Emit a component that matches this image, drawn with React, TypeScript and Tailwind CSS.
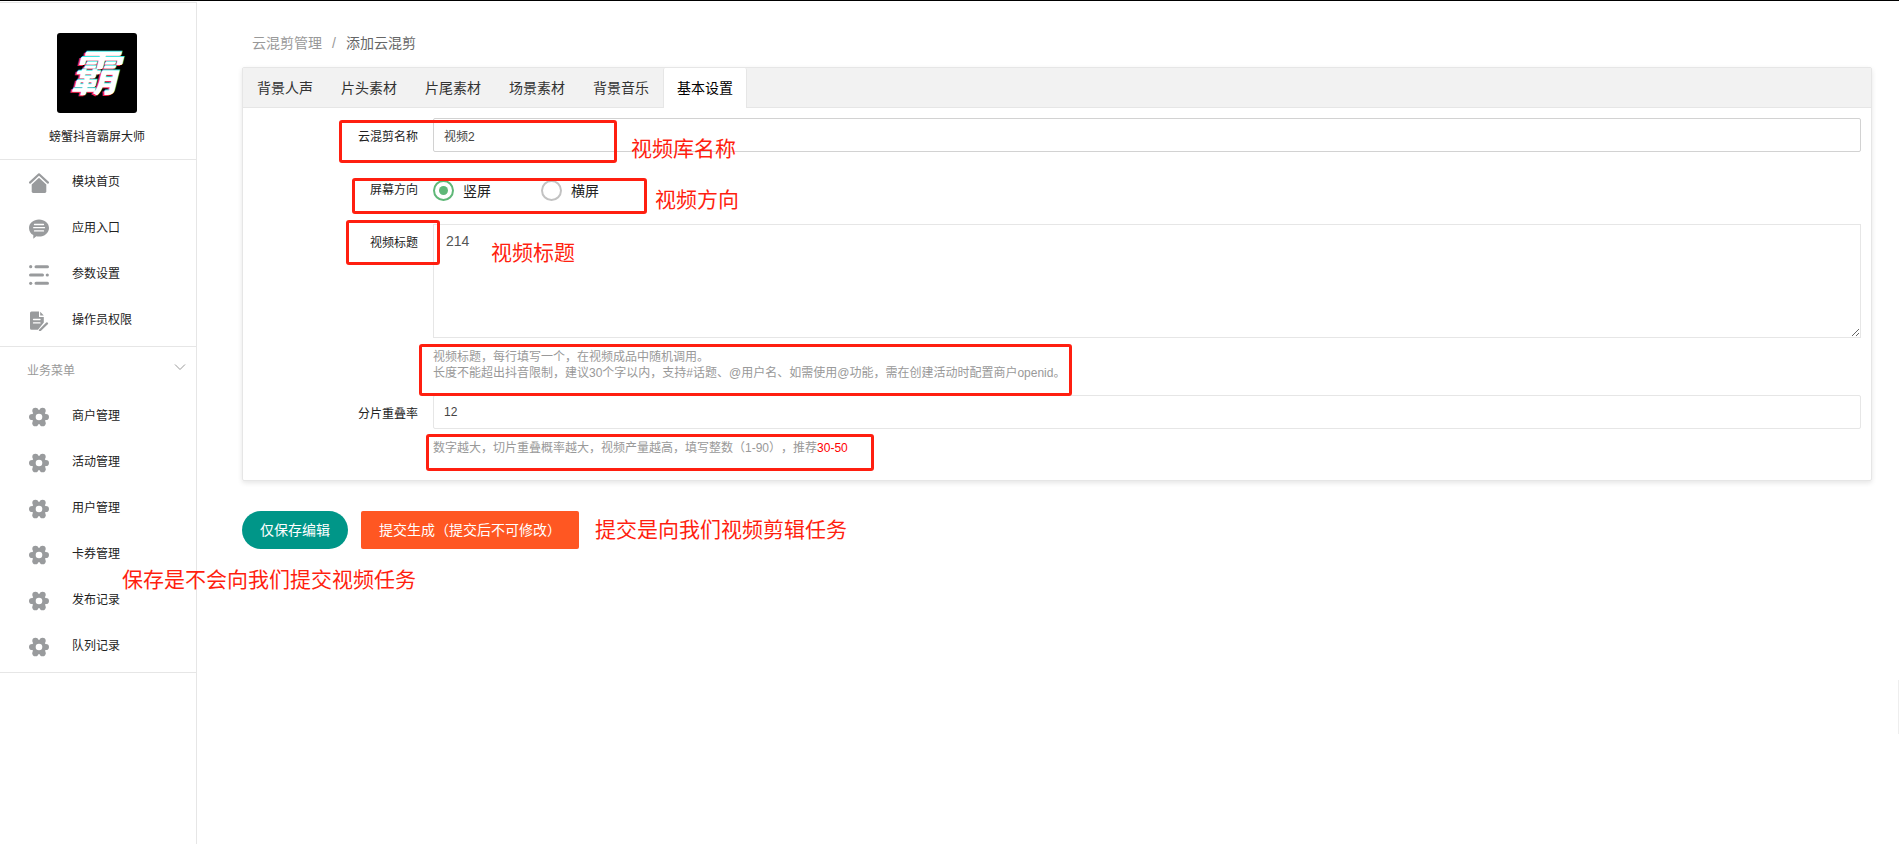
import React, { useState } from "react";

const systemMenu = [
  { name: "模块首页", icon: "home" },
  { name: "应用入口", icon: "chat" },
  { name: "参数设置", icon: "sliders" },
  { name: "操作员权限", icon: "doc" },
];

const businessMenu = ["商户管理", "活动管理", "用户管理", "卡券管理", "发布记录", "队列记录"];

const tabs = ["背景人声", "片头素材", "片尾素材", "场景素材", "背景音乐", "基本设置"];

function MenuIcon({ kind }: { kind: string }) {
  return (
    <svg viewBox="0 0 20 20" className="size-5 shrink-0" fill="#999b9d" aria-hidden="true">
      {kind === "home" && (
        <>
          <path d="M1 9.600 10 1.300l9 8.300" fill="none" stroke="#999b9d" strokeWidth="2.200" strokeLinecap="round" strokeLinejoin="round" />
          <path d="M10 4.800 17.300 11.500v7.100a1.400 1.400 0 0 1-1.400 1.400H4.100a1.400 1.400 0 0 1-1.400-1.400V11.500z" />
        </>
      )}
      {kind === "chat" && (
        <>
          <path d="M10 0.500c5.600 0 10 3.600 10 8.400s-4.400 8.600-10 8.600c-1 0-1.900-.1-2.700-.3L4.300 19.800v-3.700C1.700 14.600 0 12 0 8.900 0 4.100 4.400.5 10 .5z" />
          <path d="M5.500 5.500h9M4.700 8.700h10.800M5.500 11.900h9" stroke="#fff" strokeWidth="1.300" strokeLinecap="round" />
        </>
      )}
      {kind === "sliders" && (
        <>
          <path d="M7 1.700h11.500M1.500 10h12M7 18.300h11.500" stroke="#999b9d" strokeWidth="3" strokeLinecap="round" />
          <circle cx="1.700" cy="1.700" r="1.600" />
          <circle cx="18.300" cy="10" r="1.600" />
          <circle cx="1.700" cy="18.300" r="1.600" />
        </>
      )}
      {kind === "doc" && (
        <>
          <path d="M2.500 .5H10v5.500h4.800v5.500L9 18.800H2.500A1.500 1.500 0 0 1 1 17.300V2A1.500 1.500 0 0 1 2.500.5zM11.200.8l3.600 3.800h-3.600z" />
          <path d="M4.500 8.500h6.500M4.500 11.900h6.500" stroke="#fff" strokeWidth="1.300" strokeLinecap="round" />
          <path d="M11 19.200 18 12.400" stroke="#999b9d" strokeWidth="2.200" strokeLinecap="round" />
        </>
      )}
      {kind === "gear" && (
        <>
          <circle cx="10" cy="10" r="7.200" />
          <circle cx="3.100" cy="10" r="3.100" />
          <circle cx="16.900" cy="10" r="3.100" />
          <circle cx="6.400" cy="3.800" r="3.100" />
          <circle cx="13.600" cy="3.800" r="3.100" />
          <circle cx="6.400" cy="16.200" r="3.100" />
          <circle cx="13.600" cy="16.200" r="3.100" />
          <circle cx="10" cy="10" r="3.300" fill="#fff" />
        </>
      )}
    </svg>
  );
}

function MenuItem({ name, icon }: { name: string; icon: string }) {
  return (
    <li>
      <a href="#" className="flex h-[46px] items-center gap-[23px] pl-[29px] text-xs text-[#222]">
        <MenuIcon kind={icon} />
        <span className="pb-0.5">{name}</span>
      </a>
    </li>
  );
}

function Mark({ className }: { className: string }) {
  return <div className={`pointer-events-none absolute rounded-[3px] border-3 border-[#ff1f10] ${className}`} />;
}

function Note({ className, children }: { className: string; children: string }) {
  return (
    <p className={`pointer-events-none absolute text-[21px] leading-8 whitespace-nowrap text-[#ff1f10] ${className}`}>
      {children}
    </p>
  );
}

const label = "w-[175px] shrink-0 text-right text-xs leading-5 text-[#222]";
const radio =
  "grid size-[21px] appearance-none place-items-center rounded-full border-2 border-[#c2c2c2] bg-white before:size-[9px] before:rounded-full checked:border-[#5fb878] checked:before:bg-[#5fb878]";

export default function App() {
  const [active, setActive] = useState("基本设置");
  const [direction, setDirection] = useState("竖屏");

  return (
    <div className="relative flex min-h-screen border-t border-black bg-white font-['Liberation_Sans','Noto_Sans_CJK_SC',sans-serif] [text-spacing-trim:space-all]">
      <aside className="mt-px w-[197px] shrink-0 border-t border-r border-[#e6e6e6]">
        <header className="flex h-[157px] flex-col items-center border-b border-[#e6e6e6] pt-[30px] pr-0.5">
          <svg viewBox="0 0 80 80" className="size-20 rounded-[3px] bg-black" role="img" aria-label="霸">
            <g fontFamily="Noto Sans CJK SC" fontWeight="700" fontStyle="italic" fontSize="48" textAnchor="middle">
              <text x="35" y="59" fill="#f5264f">霸</text>
              <text x="38" y="57" fill="#3fe5e2">霸</text>
              <text x="37" y="58" fill="#fff">霸</text>
            </g>
          </svg>
          <h1 className="mt-3.5 text-xs leading-5 text-[#222]">螃蟹抖音霸屏大师</h1>
        </header>
        <nav>
          <ul className="border-b border-[#e6e6e6] pb-0.5">
            {systemMenu.map((item) => (
              <MenuItem key={item.name} {...item} />
            ))}
          </ul>
          <button className="flex h-[47px] w-full items-center justify-between pr-2.5 pl-[27px] text-xs text-[#999]">
            业务菜单
            <svg viewBox="0 0 12 8" className="mb-2 h-2 w-3" fill="none" stroke="#999" aria-hidden="true">
              <path d="M1 1.500 6 6.500 11 1.500" />
            </svg>
          </button>
          <ul className="border-b border-[#e6e6e6] pb-0.5">
            {businessMenu.map((name) => (
              <MenuItem key={name} name={name} icon="gear" />
            ))}
          </ul>
        </nav>
      </aside>

      <main className="min-w-0 flex-1 pt-8 pr-[27px] pl-[45px]">
        <nav className="flex h-5 items-center gap-2.5 pl-2.5 text-sm text-[#999]">
          <a href="#">云混剪管理</a>
          <span>/</span>
          <a href="#" className="text-[#666]">添加云混剪</a>
        </nav>

        <section className="mt-3.5 rounded-xs border border-[#e6e6e6] pb-6 shadow-[0_2px_5px_0_rgba(0,0,0,0.1)]">
          <div className="flex h-10 border-b border-[#e6e6e6] bg-[#f2f2f2]" role="tablist">
            {tabs.map((tab) => (
              <button
                key={tab}
                role="tab"
                aria-selected={tab === active}
                onClick={() => setActive(tab)}
                className={
                  tab === active
                    ? "h-10 rounded-t-xs border-x border-[#e6e6e6] bg-white px-[13px] text-sm text-black"
                    : "h-10 px-3.5 text-sm text-[#333]"
                }
              >
                {tab}
              </button>
            ))}
          </div>

          <form className="pt-2.5 pr-2.5">
            <div className="flex gap-[15px]">
              <label htmlFor="name" className={`${label} pt-[9px]`}>云混剪名称</label>
              <input id="name" defaultValue="视频2" className="h-[34px] min-w-0 flex-1 rounded-xs border border-[#d2d2d2] px-2.5 text-xs text-[#444]" />
            </div>

            <div className="mt-7 flex gap-[15px]" role="radiogroup" aria-label="屏幕方向">
              <span className={label}>屏幕方向</span>
              <div className="flex gap-[50px]">
                {["竖屏", "横屏"].map((name) => (
                  <label key={name} className="flex items-center gap-[9px] text-sm text-[#222]">
                    <input type="radio" name="direction" checked={direction === name} onChange={() => setDirection(name)} className={radio} />
                    {name}
                  </label>
                ))}
              </div>
            </div>

            <div className="mt-[23px] flex gap-[15px]">
              <label htmlFor="title" className={`${label} pt-[9px]`}>视频标题</label>
              <div className="min-w-0 flex-1">
                <textarea id="title" defaultValue="214" className="block h-[114px] w-full resize border border-[#e6e6e6] px-3 py-1.5 text-sm text-[#555]" />
                <p className="mt-[11px] text-xs leading-4 text-[#999]">
                  视频标题，每行填写一个，在视频成品中随机调用。
                  <br />
                  长度不能超出抖音限制，建议30个字以内，支持#话题、@用户名、如需使用@功能，需在创建活动时配置商户openid。
                </p>
              </div>
            </div>

            <div className="mt-3.5 flex gap-[15px]">
              <label htmlFor="overlap" className={`${label} pt-[9px]`}>分片重叠率</label>
              <div className="min-w-0 flex-1">
                <input id="overlap" defaultValue="12" className="block h-[34px] w-full rounded-xs border border-[#e6e6e6] px-2.5 text-xs text-[#444]" />
                <p className="mt-[11px] text-xs leading-4 text-[#999]">
                  数字越大，切片重叠概率越大，视频产量越高，填写整数（1-90），推荐<span className="text-[#ff0000]">30-50</span>
                </p>
              </div>
            </div>
          </form>
        </section>

        <div className="mt-[30px] flex gap-[13px]">
          <button className="h-[38px] rounded-full bg-[#009688] px-[18px] text-sm text-white">仅保存编辑</button>
          <button className="h-[38px] rounded-xs bg-[#ff5722] px-[18px] text-sm text-white">提交生成（提交后不可修改）</button>
        </div>
      </main>

      <Mark className="top-[119px] left-[339px] h-[43px] w-[278px]" />
      <Note className="top-[132px] left-[631px]">视频库名称</Note>
      <Mark className="top-[177px] left-[352px] h-9 w-[295px]" />
      <Note className="top-[183px] left-[655px]">视频方向</Note>
      <Mark className="top-[219px] left-[346px] h-[45px] w-[94px]" />
      <Note className="top-[236px] left-[491px]">视频标题</Note>
      <Mark className="top-[343px] left-[419px] h-[52px] w-[653px]" />
      <Mark className="top-[433px] left-[426px] h-[37px] w-[448px]" />
      <Note className="top-[513px] left-[595px]">提交是向我们视频剪辑任务</Note>
      <Note className="top-[563px] left-[122px]">保存是不会向我们提交视频任务</Note>
      <div className="absolute top-[679px] right-0 h-[54px] w-px bg-[#eee]" />
    </div>
  );
}
